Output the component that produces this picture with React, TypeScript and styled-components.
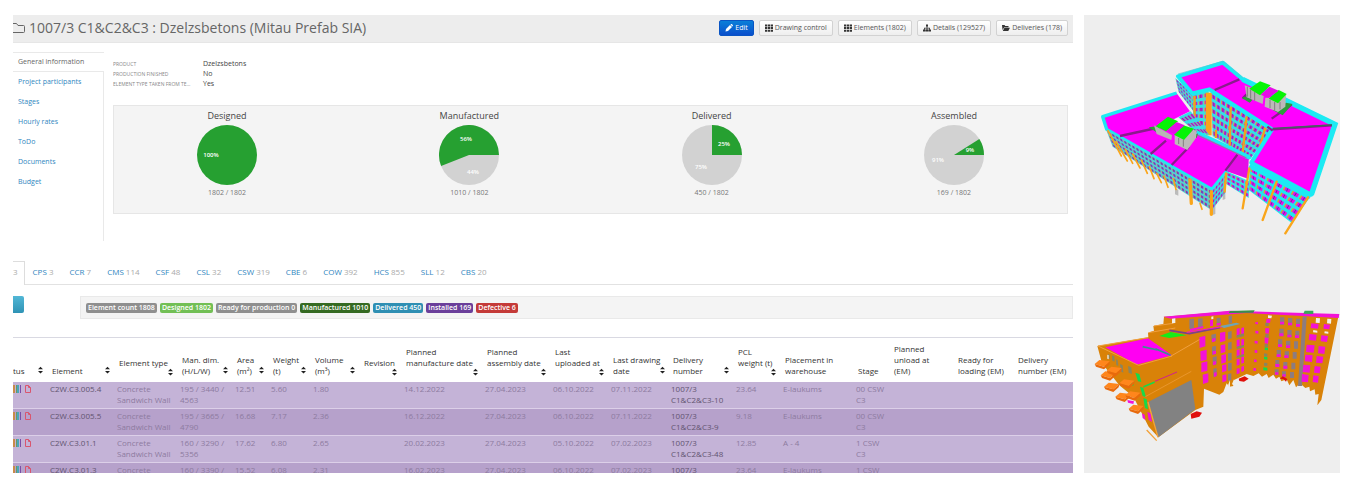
import React from 'react';
import styled, { createGlobalStyle } from 'styled-components';

const GlobalStyle = createGlobalStyle`
  * { box-sizing: border-box; }
  body { margin: 0; background: #fff; color: #555; font: 8px/11px "Open Sans", sans-serif; }
  button { font-family: inherit; }
`;

const Page = styled.div`
  display: grid;
  grid-template-columns: minmax(0, 1fr) 256px;
  gap: 11px;
  height: 100vh;
  padding: 15px 24px 15px 13px;
`;
const Content = styled.main`
  min-width: 0;
  overflow: hidden;
`;
const Preview = styled.aside`
  background: #eeeeee;
  overflow: hidden;
  svg { display: block; width: 100%; height: auto; }
`;

const Header = styled.header`
  display: flex;
  align-items: center;
  gap: 3px;
  height: 28px;
  padding: 0 5px 2px 0;
  background: #ededed;
  border-bottom: 1px solid #e6e6e6;
`;
const Title = styled.h1`
  flex: 1;
  margin: 0;
  font-size: 14px;
  line-height: 20px;
  font-weight: 400;
  color: #666;
  white-space: nowrap;
`;
const Actions = styled.div`
  display: flex;
  gap: 5px;
`;
const ActionButton = styled.button<{ $primary?: boolean }>`
  display: flex;
  align-items: center;
  justify-content: center;
  gap: 2px;
  height: 16px;
  padding: 0 5px;
  border: 1px solid ${p => (p.$primary ? '#0a55c4' : '#d2d2d2')};
  border-radius: 2px;
  background: ${p => (p.$primary ? 'linear-gradient(#0a7fd8, #0b4fcc)' : 'linear-gradient(#ffffff, #eeeeee)')};
  color: ${p => (p.$primary ? '#fff' : '#555')};
  font-size: 7px;
  line-height: 10px;
  white-space: nowrap;
  svg { width: 8px; height: 8px; fill: ${p => (p.$primary ? '#fff' : '#333')}; }
`;

const Overview = styled.section`
  display: grid;
  grid-template-columns: 91px minmax(0, 1fr);
  margin-top: 9px;
`;
const SideNav = styled.nav`
  display: flex;
  flex-direction: column;
  height: 189px;
`;
const SideLink = styled.a<{ $active?: boolean }>`
  height: 20px;
  padding: ${p => (p.$active ? '4px' : '5px')} 5px 0;
  font-size: 7px;
  line-height: 10px;
  color: ${p => (p.$active ? '#666' : '#2f86c0')};
  text-decoration: none;
  border: 0 solid #e9e9e9;
  border-width: ${p => (p.$active ? '1px 0' : '0 1px 0 0')};
`;
const SideFill = styled.div`
  flex: 1;
  border-right: 1px solid #e9e9e9;
`;
const OverviewBody = styled.div`
  padding: 7px 5px 0 9px;
`;
const Facts = styled.dl`
  display: grid;
  grid-template-columns: 90px 1fr;
  grid-auto-rows: 10px;
  margin: 0 0 16px;
  line-height: 10px;
`;
const FactName = styled.dt`
  padding-right: 12px;
  font-size: 5px;
  color: #888;
  text-transform: uppercase;
  overflow: hidden;
  text-overflow: ellipsis;
  white-space: nowrap;
`;
const FactValue = styled.dd`
  margin: 0;
  font-size: 7px;
  color: #444;
`;
const Charts = styled.div`
  display: flex;
  justify-content: space-between;
  height: 109px;
  padding: 2px 73px 0;
  background: #f4f4f4;
  border: 1px solid #e6e6e6;
`;
const Chart = styled.figure`
  display: flex;
  flex-direction: column;
  align-items: center;
  width: 80px;
  margin: 0;
  svg { width: 60px; height: 60px; margin-top: 2px; }
`;
const ChartTitle = styled.figcaption`
  font-size: 9px;
  line-height: 15px;
  color: #444;
`;
const ChartTotal = styled.span`
  margin-top: 2px;
  font-size: 7px;
  color: #777;
`;
const PieLabel = styled.text`
  font-size: 6px;
  font-weight: 600;
  fill: #fff;
  text-anchor: middle;
  dominant-baseline: central;
`;

const Tabs = styled.nav`
  display: flex;
  height: 24px;
  margin-top: 20px;
  border-bottom: 1px solid #e2e2e2;
`;
const Tab = styled.a<{ $active?: boolean }>`
  padding: ${p => (p.$active ? '4px 6px 0 0' : '5px 8px 0')};
  height: ${p => (p.$active ? '24px' : '23px')};
  background: #fff;
  color: #2f86c0;
  text-decoration: none;
  white-space: nowrap;
  border: 0 solid #ddd;
  border-width: ${p => (p.$active ? '1px 1px 0 0' : '0')};
`;
const Count = styled.span`
  color: #aaa;
`;
const Filters = styled.div`
  display: flex;
  justify-content: space-between;
  margin-top: 11px;
`;
const TealButton = styled.button`
  width: 11px;
  height: 17px;
  padding: 0;
  border: 0;
  border-radius: 0 2px 2px 0;
  background: linear-gradient(#52b7d6, #2f93b5);
`;
const Legend = styled.div`
  display: flex;
  align-items: center;
  gap: 3px;
  width: calc(100% - 67px);
  height: 23px;
  padding: 0 5px;
  background: #f4f4f4;
  border: 1px solid #e9e9e9;
`;
const Badge = styled.span<{ $color: string }>`
  padding: 0 2px;
  border-radius: 2px;
  background: ${p => p.$color};
  color: #fff;
  font-size: 7px;
  line-height: 10px;
  font-weight: 600;
  white-space: nowrap;
`;

const Table = styled.table`
  width: 100%;
  margin-top: 18px;
  table-layout: fixed;
  border-collapse: separate;
  border-spacing: 0;
  border-top: 1px solid #d9d9e2;
`;
const HeadCell = styled.th`
  height: 44px;
  padding: 0 4px 6px 5px;
  vertical-align: bottom;
  text-align: left;
  font-weight: 400;
  color: #333;
  &:first-child { padding-left: 0; }
`;
const HeadLabel = styled.div<{ $stacked?: boolean }>`
  display: flex;
  flex-direction: ${p => (p.$stacked ? 'column' : 'row')};
  align-items: ${p => (p.$stacked ? 'stretch' : 'flex-end')};
  justify-content: space-between;
  white-space: nowrap;
`;
const SortButton = styled.button<{ $stacked?: boolean }>`
  align-self: flex-end;
  display: flex;
  width: 5px;
  height: 8px;
  margin: ${p => (p.$stacked ? '0' : '0 0 2px')};
  padding: 0;
  border: 0;
  background: none;
  svg { width: 5px; height: 8px; fill: #222; }
`;
const Row = styled.tr`
  background: #c4b3d7;
  &:nth-child(even) { background: #b6a1cb; }
`;
const Cell = styled.td<{ $strong?: boolean }>`
  height: 27px;
  padding: 1px 0 3px 3px;
  border-bottom: 1px solid #dccfe8;
  vertical-align: top;
  white-space: pre-line;
  color: ${p => (p.$strong ? '#625470' : '#8d7b9f')};
  &:first-child { padding-left: 0; }
`;
const StatusIcons = styled.div`
  display: flex;
  gap: 3px;
  padding-top: 2px;
`;

const icons: Record<string, React.ReactNode> = {
  pencil: <path d="M1 15l1-5 8-8 4 4-8 8zM11 1l1-1q1-.5 2 .5l1.500 1.500q.8 1 0 2L14.500 5z" />,
  grid: <path d="M0 1h4.500v4H0zM5.700 1h4.500v4H5.700zM11.400 1H16v4h-4.600zM0 6.200h4.500v4H0zM5.700 6.200h4.500v4H5.700zM11.400 6.200H16v4h-4.600zM0 11.400h4.500v4H0zM5.700 11.400h4.500v4H5.700zM11.400 11.400H16v4h-4.600z" />,
  tree: <path d="M6 1h4v4H8.800v2.500H14V11h2v4h-5v-4h1.500V9H8.800v2h1.700v4h-5v-4h1.700V9H3.500v2H5v4H0v-4h2V7.500h5.200V5H6z" />,
  folder: <path d="M0 2h5l1.500 2H13v2.500H4.500L1 12zM5 7.500h11L12.500 14H1.500z" />,
};

const actions = [
  { icon: 'pencil', label: 'Edit', primary: true },
  { icon: 'grid', label: 'Drawing control' },
  { icon: 'grid', label: 'Elements (1802)' },
  { icon: 'tree', label: 'Details (129527)' },
  { icon: 'folder', label: 'Deliveries (178)' },
];
const sections = ['General information', 'Project participants', 'Stages', 'Hourly rates', 'ToDo', 'Documents', 'Budget'];
const facts = [
  ['Product', 'Dzelzsbetons'],
  ['Production finished', 'No'],
  ['Element type taken from Tekla', 'Yes'],
];
const charts = [
  { title: 'Designed', done: 100, total: '1802 / 1802', labels: [{ x: 14, y: 30, t: '100%' }] },
  { title: 'Manufactured', done: 56, total: '1010 / 1802', labels: [{ x: 27, y: 14, t: '56%' }, { x: 34, y: 47, t: '44%' }] },
  { title: 'Delivered', done: 25, total: '450 / 1802', labels: [{ x: 42, y: 19, t: '25%' }, { x: 19, y: 42, t: '75%' }] },
  { title: 'Assembled', done: 9, total: '169 / 1802', labels: [{ x: 46, y: 25, t: '9%' }, { x: 14, y: 35, t: '91%' }] },
];
const tabs: [string, number][] = [['CPS', 3], ['CCR', 7], ['CMS', 114], ['CSF', 48], ['CSL', 32], ['CSW', 319], ['CBE', 6], ['COW', 392], ['HCS', 855], ['SLL', 12], ['CBS', 20]];
const badges = [
  ['Element count 1808', '#8f8f8f'],
  ['Designed 1802', '#72bf55'],
  ['Ready for production 0', '#8f8f8f'],
  ['Manufactured 1010', '#356a22'],
  ['Delivered 450', '#2f8fb3'],
  ['Installed 169', '#6b3f9a'],
  ['Defective 6', '#c43a38'],
];

type Column = { w: number; label: string; sort?: 'inline' | 'stacked' };
const columns: Column[] = [
  { w: 34, label: 'tus', sort: 'inline' },
  { w: 67, label: 'Element', sort: 'inline' },
  { w: 63, label: 'Element type', sort: 'stacked' },
  { w: 55, label: 'Man. dim.\n(H/L/W)', sort: 'inline' },
  { w: 36, label: 'Area\n(m²)', sort: 'inline' },
  { w: 42, label: 'Weight\n(t)', sort: 'inline' },
  { w: 49, label: 'Volume\n(m³)', sort: 'inline' },
  { w: 42, label: 'Revision', sort: 'stacked' },
  { w: 81, label: 'Planned\nmanufacture date', sort: 'stacked' },
  { w: 68, label: 'Planned\nassembly date', sort: 'stacked' },
  { w: 58, label: 'Last\nuploaded at', sort: 'stacked' },
  { w: 60, label: 'Last drawing\ndate', sort: 'inline' },
  { w: 65, label: 'Delivery\nnumber', sort: 'inline' },
  { w: 47, label: 'PCL\nweight (t)', sort: 'stacked' },
  { w: 73, label: 'Placement in\nwarehouse' },
  { w: 36, label: 'Stage' },
  { w: 64, label: 'Planned\nunload at\n(EM)' },
  { w: 60, label: 'Ready for\nloading (EM)' },
  { w: 60, label: 'Delivery\nnumber (EM)' },
];
const wall = 'Concrete\nSandwich Wall';
const rows = [
  ['C2W.C3.005.4', wall, '195 / 3440 /\n4563', '12.51', '5.60', '1.80', '', '14.12.2022', '27.04.2023', '06.10.2022', '07.11.2022', '1007/3\nC1&C2&C3-10', '23.64', 'E-laukums', '00 CSW\nC3', '', '', ''],
  ['C2W.C3.005.5', wall, '195 / 3665 /\n4790', '16.68', '7.17', '2.36', '', '16.12.2022', '27.04.2023', '06.10.2022', '07.11.2022', '1007/3\nC1&C2&C3-9', '9.18', 'E-laukums', '00 CSW\nC3', '', '', ''],
  ['C2W.C3.01.1', wall, '160 / 3290 /\n5356', '17.62', '6.80', '2.65', '', '20.02.2023', '27.04.2023', '05.10.2022', '07.02.2023', '1007/3\nC1&C2&C3-48', '12.85', 'A - 4', '1 CSW\nC3', '', '', ''],
  ['C2W.C3.01.3', 'Concrete', '160 / 3390 /', '15.52', '6.08', '2.31', '', '16.02.2023', '27.04.2023', '06.10.2022', '07.02.2023', '1007/3', '23.64', 'E-laukums', '1 CSW', '', '', ''],
];

function Pie({ done, labels }: { done: number; labels: { x: number; y: number; t: string }[] }) {
  const a = (done / 100) * Math.PI * 2;
  const x = 30 + 30 * Math.cos(a);
  const y = 30 - 30 * Math.sin(a);
  return (
    <svg viewBox="0 0 60 60">
      <circle cx="30" cy="30" r="30" fill={done === 100 ? '#26a031' : '#d2d2d2'} />
      {done < 100 && <path d={`M30 30H60A30 30 0 ${done > 50 ? 1 : 0} 0 ${x} ${y}Z`} fill="#26a031" />}
      {labels.map(l => <PieLabel key={l.t} x={l.x} y={l.y}>{l.t}</PieLabel>)}
    </svg>
  );
}

type Pt = [number, number];
type Quad = [Pt, Pt, Pt, Pt];
/* Point inside a quad given as top-left, top-right, bottom-right, bottom-left. */
const at = (q: Quad, u: number, v: number): string => {
  const f = (i: 0 | 1) =>
    (1 - v) * ((1 - u) * q[0][i] + u * q[1][i]) + v * ((1 - u) * q[3][i] + u * q[2][i]);
  return `${f(0).toFixed(1)},${f(1).toFixed(1)}`;
};
function cells(q: Quad, cols: number, nrows: number, x0: number, x1: number, y0: number, y1: number) {
  let d = '';
  for (let r = 0; r < nrows; r++) {
    for (let c = 0; c < cols; c++) {
      const [u0, u1, v0, v1] = [(c + x0) / cols, (c + x1) / cols, (r + y0) / nrows, (r + y1) / nrows];
      d += `M${at(q, u0, v0)}L${at(q, u1, v0)}L${at(q, u1, v1)}L${at(q, u0, v1)}Z`;
    }
  }
  return d;
}
function Facade({ q, cols, nrows, base = '#35dfe6', glass = '#c61ccb', trim = '#d99b3c' }: { q: Quad; cols: number; nrows: number; base?: string; glass?: string; trim?: string }) {
  return (
    <g>
      <polygon points={q.map(p => p.join(',')).join(' ')} fill={base} />
      <path d={cells(q, cols, nrows, 0.1, 0.28, 0.3, 0.85)} fill={trim} />
      <path d={cells(q, cols, nrows, 0.28, 0.88, 0.3, 0.82)} fill={glass} />
      <path d={cells(q, cols, nrows, 0.5, 0.6, 0.3, 0.82)} fill="#5a3a9c" />
    </g>
  );
}

function AerialModel() {
  return (
    <svg viewBox="12 15 768 675" role="img" aria-label="Aerial model">
      <polygon points="395,365 520,425 505,462 400,395" fill="#dfe6e4" />
      <path d="M285 535v18l10 4v-18zM398 590v25l8-3v-25zM428 545v25l8-3v-25z" fill="#bbb" />
      <Facade q={[[286, 204], [342, 254], [342, 306], [296, 246]]} cols={6} nrows={4} trim="#f2a62a" />
      <Facade q={[[336, 254], [386, 242], [386, 374], [342, 360]]} cols={3} nrows={6} trim="#f2a62a" />
      <Facade q={[[392, 244], [576, 358], [512, 446], [398, 378]]} cols={12} nrows={6} trim="#eba02e" />
      <path d="M452 290l-3 118M500 320l-12 108M556 352l-20 70M408 360v24M344 258v98" stroke="#f0a020" strokeWidth="7" />
      <path d="M386 248v128" stroke="#f9a51a" strokeWidth="18" />
      <polygon points="294,199 429,158 488,208 765,343 694,554 514,458 576,358 388,238 336,250" fill="#f0f" stroke="#1ceaf3" strokeWidth="12" strokeLinejoin="round" />
      <path d="M488 208l277 135-71 211" fill="none" stroke="#1ceaf3" strokeWidth="16" />
      <path d="M294 192l135-38 60 50" fill="none" stroke="#59c9d2" strokeWidth="2" />
      <polygon points="70,320 290,250 330,304 272,332 350,366 508,440 440,482 396,536 80,358" fill="#f0f" />
      <Facade q={[[295, 322], [332, 304], [388, 375], [350, 368]]} cols={4} nrows={3} trim="#c5a35a" />
      <path d="M290 249L68 320l12 38 316 180 44-54 72-44M350 366l160 76" fill="none" stroke="#1ceaf3" strokeWidth="10" strokeLinejoin="round" />
      <path d="M345 372l155 72" stroke="#7d9495" strokeWidth="3" />
      <polygon points="440,484 470,437 506,448 504,506" fill="#e60de6" />
      <Facade q={[[78, 358], [396, 540], [394, 600], [98, 410]]} cols={26} nrows={4} base="#4fd3d6" glass="#8c3dbd" trim="#c7a964" />
      <Facade q={[[396, 540], [440, 486], [436, 548], [396, 600]]} cols={5} nrows={4} trim="#c7a964" />
      <Facade q={[[440, 484], [508, 514], [506, 564], [438, 522]]} cols={5} nrows={3} base="#30e4ea" glass="#d813dc" />
      <Facade q={[[510, 468], [690, 562], [634, 638], [506, 540]]} cols={7} nrows={4} base="#22e6ee" glass="#e80ee8" trim="#dda22f" />
      <path d="M508 468l184 92" stroke="#1ceaf3" strokeWidth="14" />
      <g stroke="#f9a51a" strokeLinecap="round">
        <path d="M84 362l40 76M108 395l34 58M136 418l22 42M158 432l22 42M184 450l18 40M208 470l14 36M230 490l14 28M252 498l12 34M280 506l8 32M360 580l6 18" strokeWidth="5" fill="none" />
        <path d="M330 510l4 70M394 545v68" strokeWidth="10" />
        <path d="M508 475l-20 120M590 515l-42 115M684 562l-68 108M438 490l-4 55" strokeWidth="7" />
      </g>
      <path d="M404 240l74-32M120 378l110-24M212 432l46-40M275 465l52-54M436 482l36-48M575 326l60-42M578 358l178-12M488 265l12-12M562 350l16 12" stroke="#8a1b8c" strokeWidth="7" />
      <path d="M578 355l178-10" stroke="#41645e" strokeWidth="4" />
      <path d="M206 352l30-4 10 18-8 6zM340 378l14-8-4 14zM485 264l18-6 14 12-8 8zM578 300l30 16 30-34-20-4z" fill="#2d9c3b" />
      <g>
        <polygon points="222,346 276,376 274,390 230,372" fill="#b9b4b6" />
        <polygon points="284,376 350,360 348,384 322,420 284,402" fill="#bdb8b9" />
        <polygon points="264,320 294,334 258,364 228,348" fill="#06f406" />
        <polygon points="310,346 342,356 312,390 282,374" fill="#06f406" />
        <polygon points="290,336 314,346 284,372 260,362" fill="#e50ee6" />
        <polygon points="494,226 552,250 548,282 500,262" fill="#b9b4b6" />
        <polygon points="556,264 618,254 616,290 594,306 554,290" fill="#bdb8b9" />
        <polygon points="540,214 572,226 540,256 508,236" fill="#06f406" />
        <polygon points="596,240 620,252 594,280 566,266" fill="#06f406" />
        <polygon points="568,230 596,242 566,264 542,254" fill="#e50ee6" />
        <path d="M502 230v30M512 238v28M524 246v26M570 270v24M584 276v26M600 276v22M296 384v18M310 390v20" stroke="#817c80" strokeWidth="3" />
      </g>
    </svg>
  );
}

function StreetModel() {
  const o = '#d98208';
  const m = '#f312d6';
  const balconies: Pt[] = [[44, 366], [62, 400], [80, 386], [72, 434], [118, 424], [106, 464], [136, 460], [146, 500]];
  return (
    <svg viewBox="12 0 768 699" role="img" aria-label="Street level model">
      <polygon fill={o} points="52,318 205,292 204,278 222,272 220,258 250,252 252,230 450,214 776,226 742,392 724,480 712,496 716,462 706,464 704,448 690,454 688,440 676,444 660,430 648,442 640,420 628,436 620,418 604,424 598,410 588,416 580,404 566,414 560,402 546,410 536,400 520,408 500,402 462,420 460,438 448,440 440,430 430,456 418,464 372,446 370,500 346,510 235,592 206,560 160,470 118,436 66,370" />
      <polygon points="250,230 450,212 778,222 776,234 500,219 272,236" fill={m} />
      <polygon points="450,213 524,211 520,218 446,219" fill="#3c8f49" />
      <polygon points="674,212 700,212 700,222 670,221" fill="#39a857" />
      <polygon points="76,322 204,295 276,346 170,374" fill="#ff00f2" />
      <path d="M54 318l150-25M54 318l122 58 100-28M206 278l80-14M222 258l58-8M270 350l100-58" stroke="#f0a040" strokeWidth="3" fill="none" />
      <path d="M188 320l44 10M226 326l46 20" stroke="#39948d" strokeWidth="5" />
      <polygon points="238,288 272,276 320,286 268,294" fill="#17ec17" />
      <path d="M268 271l60 10 92-18" stroke="#7c4387" strokeWidth="5" fill="none" />
      <path d="M320 277l108-17" stroke="#f312d6" strokeWidth="3" />
      <polygon points="420,258 470,248 480,252 432,264" fill="#6fa5b5" />
      <g fill="#8c7c80">
        <path d="M328 238l14-2v28l-14 3zM354 236l14-1v27l-14 3zM410 234l12-1v22l-12 3zM446 228l10-1v22l-10 2z" />
        <path d="M600 232h13v22h-13zM624 234h13v22h-13zM648 236h12v24h-12z" />
        <path d="M598 266h13v22h-13zM622 270h13v22h-13zM646 272h12v22h-12z" />
        <path d="M594 298h13v22h-13zM618 302h13v22h-13zM642 304h12v22h-12z" />
        <path d="M590 330h13v20h-13zM614 334h13v20h-13zM638 336h12v20h-12z" />
        <path d="M586 360h12v20h-12zM610 366h12v20h-12zM634 368h12v20h-12z" />
        <path d="M584 388h12v16h-12zM606 394h12v16h-12zM630 396h12v18h-12z" />
        <path d="M394 284l14-3v22l-13 4zM396 320l12-3v24l-12 4zM398 352l12-3v24l-12 3zM400 386l10-2v24l-10 3z" />
        <path d="M444 276l11-3v22l-11 3zM444 308l11-3v22l-11 3zM444 340l11-2v22l-11 3zM444 370l11-2v22l-11 3zM444 402l10-2v20l-10 3z" />
        <path d="M668 230h12l-14 208h-12z" />
      </g>
      <g fill={m}>
        <path d="M330 267l40-9v6l-40 10zM390 240l9-1v18l-9 2zM410 250l12-2v6l-12 3zM526 246l8 1v6l-8-1z" />
        <path d="M358 292l18-5v32l-17 5zM361 334l19-5v30l-18 5zM364 368l18-4v28l-18 5zM368 404l17-4v27l-16 5z" />
        <path d="M396 296l10-2v10l-10 3zM398 334l10-2v9l-10 3zM399 365l9-2v10l-9 3zM402 398l8-2v12l-8 3z" />
        <path d="M420 278l16-3v28l-16 4zM422 316l14-3v23l-14 4zM424 346l14-3v24l-14 4zM426 376l13-3v20l-13 4zM427 406l12-3v20l-12 4z" />
        <path d="M470 266l9-2v22l-9 3zM484 264l8-2v24l-8 3zM470 300l9-2v20l-9 3zM484 298l8-2v20l-8 3zM470 330l9-2v20l-9 3zM484 326l8-2v20l-8 3zM470 358l9-2v18l-9 3zM484 352l8-2v18l-8 3zM470 386l9-2v16l-9 3zM484 380l8-2v15l-8 3z" />
        <path d="M600 245h12v8h-12zM624 248h12v8h-12zM648 252h12v8h-12zM598 280h12v9h-12zM622 284h12v8h-12zM645 286h12v8h-12zM594 313h12v8h-12zM618 316h12v8h-12zM590 343h12v8h-12zM613 346h12v8h-12zM586 372h12v9h-12zM610 377h12v9h-12zM585 397h10v7h-10zM607 403h10v7h-10z" />
        <path d="M694 250l22 2-2 14-22-2zM732 252l18 2-2 14-18-2zM688 282l22 2-2 18-22-2zM724 286l20 2-3 18-19-2zM680 314l24 2-3 22-23-2zM716 318l20 2-3 22-19-2zM676 344l22 2-2 20-22-2zM710 348l20 2-3 20-19-2zM670 374l21 2-2 22-21-2zM704 378l18 2-3 20-17-2zM666 402l20 3-2 22-19-2zM700 406l16 2-2 20-16-2z" />
        <path d="M560 236l12 1-2 12-12-1zM526 272l9 1v8l-9-1zM524 302l9 1v8l-9-1zM524 330l8 1v8l-8-1zM522 358l8 1v8l-8-1zM520 384l8 1v8l-8-1zM556 264l12 1-2 16-10-1zM554 292l12 1-2 18-10-1z" />
        <path d="M202 516l10 4 4 26-10-6zM186 520l8 4 2 16-8-6zM142 480l20 4-2 8-16-4z" />
      </g>
      <g fill="#17d94a">
        <path d="M554 322l10 1v8l-10-1zM552 350l10 1v8l-10-1zM550 382l12 1v9l-12-1z" />
        <path d="M166 398l12 4 6 24-10-2zM180 440l10 4 8 28-10-4zM190 474l10 4 4 30-9-4zM152 426l10 3-2 8-8-2zM190 438l34-14v5l-34 14z" />
      </g>
      <g fill="#8a8560">
        <path d="M556 248l10 1v10l-10-1zM556 282l10 1v10l-10-1zM554 312l10 1v9l-10-1zM552 340l10 1v9l-10-1zM552 368l10 1v9l-10-1zM470 286l22-6v8l-22 6zM470 320l22-6v7l-22 6zM470 348l22-6v7l-22 6z" />
        <path d="M96 346l7 3 1 16-7-3zM120 372l8 4 2 22-8-4zM144 378l10 4 2 20-10-4zM84 342l5 3 1 12-5-3zM108 358l5 2 2 18-6-3z" />
      </g>
      <g fill="#f1efe8">
        <path d="M276 236l10-1v14l-10 1zM564 226l12 1-2 8-10-1zM708 234l12 1-1 14-12-1zM742 236l12 1-1 14-12-1zM700 270l12 2v6l-13-1zM734 274l11 1v6l-12-1zM394 230l6-1v8l-6 1zM444 436l6-16v24zM456 432l6-14v20z" />
        <path d="M82 344l4 2v12l-4-2zM174 524l8 10 2 18-8-8zM186 544l6 6 2 12-6-4z" />
      </g>
      <path d="M225 424l66-28" stroke="#d0218e" strokeWidth="3" />
      <path d="M196 470l138-76" stroke="#f0a040" strokeWidth="2" />
      <polygon points="204,486 334,420 346,508 235,592" fill="#828282" />
      <path d="M204 486l30 106M200 570l30 32" stroke="#f3a23a" strokeWidth="4" />
      {balconies.map(([x, y]) => (
        <g key={`${x}-${y}`}>
          <polygon points={`${x},${y + 6} ${x + 14},${y - 6} ${x + 46},${y - 2} ${x + 28},${y + 14}`} fill="#ff861c" />
          <polygon points={`${x},${y + 6} ${x + 28},${y + 14} ${x + 46},${y - 2} ${x + 44},${y + 8} ${x + 28},${y + 22} ${x + 4},${y + 14}`} fill="#e86a0c" />
        </g>
      ))}
      <path d="M332 522l18-8 16 4-8 12-24 6zM476 416l18-7 12 7-14 9-14-2zM600 416l8-7 14 8-4 8-8-8z" fill="#e0100c" />
    </svg>
  );
}

export default function App() {
  return (
    <>
      <GlobalStyle />
      <Page>
        <Content>
          <Header>
            <svg width="13" height="14" viewBox="0 0 13 14" fill="none" stroke="#666" strokeWidth="1">
              <path d="M-2 11.500H10.500q1 0 1-1V5.500q0-1-1-1H5L3.500 2.500H-2" />
            </svg>
            <Title>1007/3 C1&amp;C2&amp;C3 : Dzelzsbetons (Mitau Prefab SIA)</Title>
            <Actions>
              {actions.map(a => (
                <ActionButton key={a.label} type="button" $primary={a.primary}>
                  <svg viewBox="0 0 16 16">{icons[a.icon]}</svg>
                  {a.label}
                </ActionButton>
              ))}
            </Actions>
          </Header>

          <Overview>
            <SideNav>
              {sections.map((s, i) => <SideLink key={s} href="#" $active={i === 0}>{s}</SideLink>)}
              <SideFill />
            </SideNav>
            <OverviewBody>
              <Facts>
                {facts.map(([name, value]) => (
                  <React.Fragment key={name}>
                    <FactName>{name}</FactName>
                    <FactValue>{value}</FactValue>
                  </React.Fragment>
                ))}
              </Facts>
              <Charts>
                {charts.map(c => (
                  <Chart key={c.title}>
                    <ChartTitle>{c.title}</ChartTitle>
                    <Pie done={c.done} labels={c.labels} />
                    <ChartTotal>{c.total}</ChartTotal>
                  </Chart>
                ))}
              </Charts>
            </OverviewBody>
          </Overview>

          <Tabs>
            <Tab href="#" $active><Count>3</Count></Tab>
            {tabs.map(([name, n]) => <Tab key={name} href="#">{name} <Count>{n}</Count></Tab>)}
          </Tabs>

          <Filters>
            <TealButton type="button" aria-label="Filter" />
            <Legend>
              {badges.map(([text, color]) => <Badge key={text} $color={color}>{text}</Badge>)}
            </Legend>
          </Filters>

          <Table>
            <colgroup>
              {columns.map((c, i) => <col key={i} width={c.w} />)}
            </colgroup>
            <thead>
              <tr>
                {columns.map((c, i) => (
                  <HeadCell key={i} scope="col">
                    <HeadLabel $stacked={c.sort === 'stacked'}>
                      <span>{c.label.split('\n').map((line, n) => <React.Fragment key={n}>{n > 0 && <br />}{line}</React.Fragment>)}</span>
                      {c.sort && (
                        <SortButton type="button" aria-label="Sort" $stacked={c.sort === 'stacked'}>
                          <svg viewBox="0 0 5 8"><path d="M0 3.300L2.500 .8 5 3.300zM0 4.900h5L2.500 7.400z" /></svg>
                        </SortButton>
                      )}
                    </HeadLabel>
                  </HeadCell>
                ))}
              </tr>
            </thead>
            <tbody>
              {rows.map(r => (
                <Row key={r[0]}>
                  <Cell>
                    <StatusIcons>
                      <svg width="9" height="8" viewBox="0 0 9 8">
                        <path d="M0 0h2v8H0z" fill="#c98a4a" />
                        <path d="M3 0h1v8H3z" fill="#6f9a5e" />
                        <path d="M4 0h2v8H4z" fill="#4aa5bb" />
                        <path d="M7 0h1v8H7z" fill="#7a4ea8" />
                      </svg>
                      <svg width="6" height="8" viewBox="0 0 6 8" fill="none" stroke="#d9566e">
                        <path d="M.5.5h3l2 2v5h-5zM3.500.5v2h2" />
                      </svg>
                    </StatusIcons>
                  </Cell>
                  {r.map((v, i) => <Cell key={i} $strong={i === 0 || i === 11}>{v}</Cell>)}
                </Row>
              ))}
            </tbody>
          </Table>
        </Content>
        <Preview>
          <AerialModel />
          <StreetModel />
        </Preview>
      </Page>
    </>
  );
}
